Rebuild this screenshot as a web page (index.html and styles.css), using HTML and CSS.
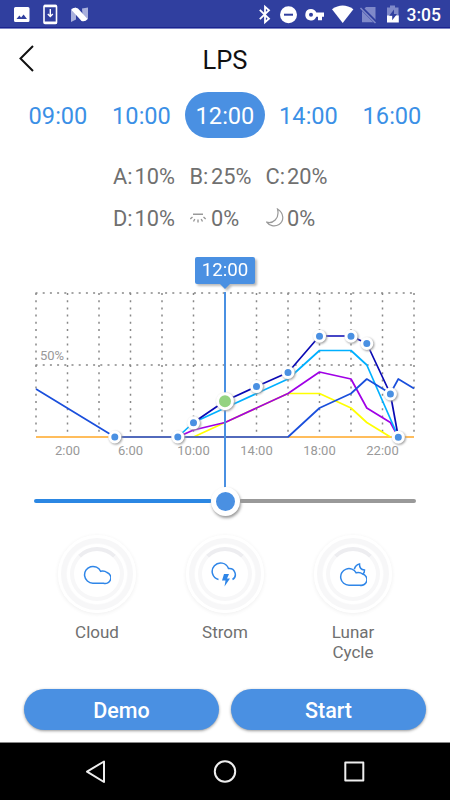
FILE: index.html
```html
<!DOCTYPE html>
<html lang="en">
<head>
  <meta charset="UTF-8">
  <title>LPS</title>
  <link rel="stylesheet" href="styles.css">
</head>
<body>

  <div class="statusbar">
    <svg width="450" height="29" viewBox="0 0 450 29">
      <path fill="#fff" fill-rule="evenodd" d="M15.500 7h12.500q1.500 0 1.500 1.500v12q0 1.500-1.500 1.500h-12.500q-1.500 0-1.500-1.500v-12q0-1.500 1.500-1.500zM16.500 19h10.500l-3.400-4.500-2.500 3-1.700-2z"/>
      <rect x="44" y="5.500" width="12.500" height="18" rx="1" fill="#303f9f" stroke="#fff" stroke-width="1.600"/>
      <path stroke="#fff" stroke-width="2.400" d="M44 6h12.500M44 22.800h12.500"/>
      <path fill="none" stroke="#fff" stroke-width="1.400" d="M50.300 9v7M47.800 14l2.500 2.500 2.500-2.500"/>
      <path fill="#a9b0dc" d="M71 9l5-1.500v12l-5 2.500zM82 8.500l6-1v11.500l-5 2z"/>
      <path fill="#fff" d="M72 9q3-2 6-.5l9.500 10.500q-2 3-6 2L72 10.500z"/>
      <path fill="none" stroke="#fff" stroke-width="1.800" d="M259.800 9.800l9.200 9-4 3.500V6.700l4 3.500-9.200 9"/>
      <circle cx="288.500" cy="14.700" r="8.500" fill="#fff"/>
      <path stroke="#303f9f" stroke-width="2" d="M284 14.700h9"/>
      <path fill="#fff" fill-rule="evenodd" d="M311 9a5.700 5.700 0 0 1 5.300 3.500H324v4.300h-2v3.500h-4v-3.500h-1.700A5.700 5.700 0 1 1 311 9zm0 3.700a2 2 0 1 0 0 4 2 2 0 0 0 0-4z"/>
      <path fill="#fff" d="M332 9.300q10.700-7.500 21.400 0L342.700 23z"/>
      <path fill="#7f89c9" d="M366 7h9.500v15.300H362V11z"/>
      <path stroke="#303f9f" stroke-width="3.500" d="M361.500 8l15 15"/>
      <path stroke="#7f89c9" stroke-width="1.500" d="M360.500 8l15 15"/>
      <path fill="#7f89c9" d="M387 7.500h3V5.500h5v2h3.500v8.500H387z"/>
      <path fill="#fff" d="M387 15.500h11.800v7H387z"/>
      <path fill="#303f9f" d="M394 9.500l-4.800 6.200h3v4.500l4.800-6.200h-3z"/>
      <text class="clock" x="406.500" y="21.300">3:05</text>
    </svg>
  </div>

  <div class="header">
    <svg class="back" width="20" height="30" viewBox="0 0 20 30">
      <path d="M15 2L2.500 14.500 15 27" fill="none" stroke="#111" stroke-width="2"/>
    </svg>
    <h1>LPS</h1>
  </div>

  <div class="times">
    <span class="time">09:00</span>
    <span class="time">10:00</span>
    <span class="time active">12:00</span>
    <span class="time">14:00</span>
    <span class="time">16:00</span>
  </div>

  <div class="levels">
    <div class="level"><span class="key">A:</span>10%</div>
    <div class="level"><span class="key">B:</span>25%</div>
    <div class="level"><span class="key">C:</span>20%</div>
    <div class="level"><span class="key">D:</span>10%</div>
    <div class="level">
      <span class="key">
        <svg width="18" height="12" viewBox="0 0 18 12">
          <path fill="none" stroke="#999" stroke-width="1.400" d="M3 2.200h10M2.500 5L.3 7M13.500 5l2.200 2M4.800 7L3.500 9.500M11.200 7l1.300 2.500M8 7.500v3"/>
        </svg>
      </span>0%
    </div>
    <div class="level">
      <span class="key">
        <svg width="19" height="20" viewBox="0 0 19 20">
          <path fill="none" stroke="#999" stroke-width="1.200" d="M11.500 1C18 5 18.500 13 13 16.500 8.500 19.300 3 17.500.7 14.200 6.500 15.800 14 11 11.500 1z"/>
        </svg>
      </span>0%
    </div>
  </div>

  <div class="tooltip">12:00</div>

  <svg class="chart" width="450" height="204" viewBox="0 284 450 204">
    <g class="grid">
      <path d="M35.500 293H415M35.500 365H415"/>
      <path d="M36 293V437M67.500 293V437M99 293V437M130.500 293V437M162 293V437M193.500 293V437M256.500 293V437M288 293V437M319.500 293V437M351 293V437M382.500 293V437M414 293V437"/>
    </g>
    <g class="labels">
      <text x="52" y="360">50%</text>
      <text x="67.500" y="455.300">2:00</text>
      <text x="130.500" y="455.300">6:00</text>
      <text x="193.500" y="455.300">10:00</text>
      <text x="256.500" y="455.300">14:00</text>
      <text x="319.500" y="455.300">18:00</text>
      <text x="382.500" y="455.300">22:00</text>
    </g>
    <g class="lines">
      <path stroke="#ffa726" d="M36 437H414"/>
      <path stroke="#ffff00" d="M193.500 437L225 422.500 288 393.500H319.500L351 408 366.800 422.500 390.400 437"/>
      <path stroke="#a000e6" d="M177.800 437L193.500 430 225 422.500 288 393.500 319.500 372 351 379 366.800 408 390.400 422.500 398.300 437"/>
      <path stroke="#00b0ff" d="M177.800 437L193.500 422.500 225 408 288 379 319.500 350.500H351L366.800 365 398.300 437"/>
      <path stroke="#1a4fdc" d="M36 389L114.800 437H288L319.500 408 351 393.500 366.800 379 390.400 393.500 398.300 379 414 388.500"/>
      <path stroke="#0a0ab4" d="M193.500 422.500L225 401 256.500 386.500 288 372.500 319.500 336H351L366.800 343.500 390.400 394 398.300 437"/>
    </g>
    <path stroke="#4a90e2" stroke-width="2" d="M225 292V488"/>
    <g class="dots">
      <circle cx="114.800" cy="437" r="5"/>
      <circle cx="177.800" cy="437" r="5"/>
      <circle cx="193.500" cy="422.800" r="5"/>
      <circle cx="256.500" cy="386.600" r="5"/>
      <circle cx="288" cy="372.400" r="5"/>
      <circle cx="319.500" cy="336.200" r="5"/>
      <circle cx="351" cy="336.200" r="5"/>
      <circle cx="366.800" cy="343.500" r="5"/>
      <circle cx="390.400" cy="394" r="5"/>
      <circle cx="398.300" cy="437.200" r="5"/>
      <circle class="now" cx="225" cy="401.200" r="7.500"/>
    </g>
  </svg>

  <div class="slider">
    <div class="track filled"></div>
    <div class="thumb"></div>
    <div class="track"></div>
  </div>

  <div class="effects">
    <div class="effect">
      <div class="ring"><div class="disc">
        <svg width="28" height="24" viewBox="0 0 28 24">
          <path d="M9.800 21.200A8.400 8.400 0 1 1 17.600 9.300Q21.500 8.500 24 10.500A5.500 5.500 0 0 1 20.500 21.200z"/>
        </svg>
      </div></div>
      <p>Cloud</p>
    </div>
    <div class="effect">
      <div class="ring"><div class="disc">
        <svg width="28" height="26" viewBox="0 0 28 26">
          <path d="M7.500 18.500A8.400 8.400 0 1 1 17.500 7.500a6 6 0 0 1 4 11"/>
          <path class="solid" d="M13 13h5l-2 4.500h3l-5.500 8 1-6h-3.500z"/>
        </svg>
      </div></div>
      <p>Strom</p>
    </div>
    <div class="effect">
      <div class="ring"><div class="disc">
        <svg width="28" height="26" viewBox="0 0 28 26">
          <path d="M10 24.200a8.300 8.300 0 1 1 7.200-12.400q4-.8 6.300 1.200a5.600 5.600 0 0 1-2.700 11.200z"/>
          <path d="M15.300 8.300q1.200-4.500 5.200-5.300-.2 5.500 5 6 .2 2.600-1.700 4"/>
        </svg>
      </div></div>
      <p>Lunar Cycle</p>
    </div>
  </div>

  <div class="buttons">
    <button type="button">Demo</button>
    <button type="button">Start</button>
  </div>

  <div class="navbar">
    <svg width="450" height="57" viewBox="0 0 450 57" fill="none" stroke="#eee" stroke-width="2" stroke-linejoin="round">
      <path d="M104 18.500v20.500L87 28.700z"/>
      <circle cx="225" cy="28.500" r="10.200"/>
      <rect x="345.300" y="19.500" width="18" height="18"/>
    </svg>
  </div>

</body>
</html>
```
FILE: styles.css
```css
* {
  box-sizing: border-box;
}
body {
  margin: 0;
  width: 450px;
  height: 800px;
  overflow: hidden;
  display: flex;
  flex-direction: column;
  background: #fff;
  font-family: Roboto, "Liberation Sans", sans-serif;
}
svg {
  display: block;
}
.statusbar {
  height: 29px;
  background: #303f9f;
  border-bottom: 1px solid #7c85c4;
  box-shadow: inset 0 -1px #1a2390;
}
.clock {
  font-size: 17.5px;
  font-weight: 500;
  fill: #fff;
}
.header {
  height: 60px;
  display: grid;
  grid-template-columns: 50px 1fr 50px;
  align-items: center;
}
.back {
  margin-left: 18px;
}
.header h1 {
  margin: 2px 0 0;
  text-align: center;
  font-size: 25.5px;
  font-weight: 400;
  color: #111;
}
.times {
  height: 46px;
  margin-top: 3px;
  padding: 0 18px;
  display: flex;
  justify-content: space-between;
}
.time {
  width: 80px;
  height: 46px;
  line-height: 49px;
  border-radius: 23px;
  text-align: center;
  font-size: 23.6px;
  color: #3b90e6;
}
.time.active {
  background: #4a90e2;
  color: #fff;
}
.levels {
  display: grid;
  grid-template-columns: 76.5px 76px 76px;
  grid-auto-rows: 42px;
  margin: 17px 0 0 113px;
}
.level {
  display: flex;
  align-items: center;
  font-size: 21.8px;
  color: #707070;
}
.key {
  width: 21.5px;
  flex: none;
}
.tooltip {
  position: relative;
  align-self: center;
  width: 60px;
  height: 27px;
  margin-top: 18px;
  border-radius: 2px;
  background: #4a90e2;
  color: #fff;
  text-align: center;
  font-size: 18.7px;
  line-height: 27px;
  filter: drop-shadow(2px 2px 1px #bbb);
}
.tooltip::after {
  content: "";
  position: absolute;
  left: 24px;
  top: 26px;
  border: 6px solid transparent;
  border-top-color: #4a90e2;
  border-bottom: 0;
}
.grid path {
  stroke: #888;
  stroke-width: 1.5;
  stroke-dasharray: 2 5.2;
}
.labels text {
  font-size: 13px;
  fill: #999;
  text-anchor: middle;
}
.lines path {
  fill: none;
  stroke-width: 1.7;
  stroke-linejoin: round;
}
.dots circle {
  fill: #4a90e2;
  stroke: #fff;
  stroke-width: 3;
  filter: drop-shadow(1px 1px 1px #999);
}
.dots .now {
  fill: #94d382;
}
.slider {
  height: 29px;
  margin: -1.5px 34px 0;
  display: flex;
  align-items: center;
}
.track {
  flex: 1;
  height: 4px;
  border-radius: 2px;
  background: #999;
}
.track.filled {
  background: #2b87e3;
}
.thumb {
  width: 29px;
  height: 29px;
  margin: 0 -1px;
  border: 5px solid #fff;
  border-radius: 50%;
  background: #4a90e2;
  box-shadow: 1px 2px 3px #999;
  z-index: 1;
}
.effects {
  display: flex;
  justify-content: center;
  gap: 48px;
  margin-top: 19px;
}
.effect {
  width: 80px;
}
.ring {
  width: 78px;
  height: 78px;
  margin: 0 auto;
  padding: 6px;
  border: 3px solid #fff;
  border-radius: 50%;
  background: radial-gradient(closest-side, #fff 82%, #f7f7f8 86%);
  box-shadow: 0 1px 4px #eee;
}
.disc {
  width: 54px;
  height: 54px;
  margin: 3px;
  display: flex;
  align-items: center;
  justify-content: center;
  border: 4px solid #f7f7f8;
  border-top-color: #ededf0;
  border-radius: 50%;
}
.disc path {
  fill: none;
  stroke: #2f86e8;
  stroke-width: 1.5;
}
.disc .solid {
  fill: #2f86e8;
  stroke: none;
}
.effect p {
  margin: 9px 12px 0;
  text-align: center;
  font-size: 17px;
  line-height: 20px;
  color: #707070;
}
.buttons {
  display: flex;
  gap: 12px;
  padding: 0 24px;
  margin-top: auto;
  margin-bottom: 12px;
}
.buttons button {
  flex: 1;
  height: 41px;
  padding: 2px 0 0;
  border: 0;
  border-radius: 21px;
  background: #4a90e2;
  box-shadow: 0 1px 3px #999;
  color: #fff;
  font-family: inherit;
  font-size: 21.5px;
  font-weight: 500;
}
.navbar {
  height: 58px;
  background: #000;
  border-top: 1px solid #888;
}
```
